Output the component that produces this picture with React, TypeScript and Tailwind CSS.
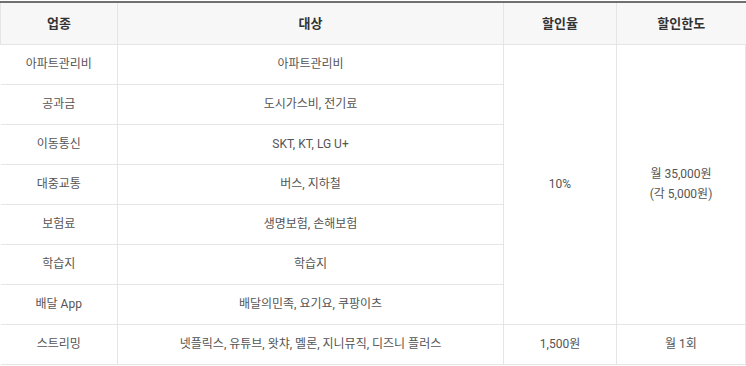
const rows = [
  { type: '아파트관리비', target: '아파트관리비' },
  { type: '공과금', target: '도시가스비, 전기료' },
  { type: '이동통신', target: 'SKT, KT, LG U+' },
  { type: '대중교통', target: '버스, 지하철' },
  { type: '보험료', target: '생명보험, 손해보험' },
  { type: '학습지', target: '학습지' },
  { type: '배달 App', target: '배달의민족, 요기요, 쿠팡이츠' },
]

const cell = 'border border-[#e5e5e5] text-center align-middle'

export default function App() {
  return (
    <div className="w-[746px] h-[366px] bg-white pt-px font-['Roboto','Noto_Sans_CJK_KR',sans-serif]">
      <table className="w-[746px] border-collapse table-fixed border-t-2 border-t-[#707070] text-[12px] text-[#555]">
        <colgroup>
          <col className="w-[117px]" />
          <col className="w-[386px]" />
          <col className="w-[113px]" />
          <col />
        </colgroup>
        <thead>
          <tr className="h-[42px] bg-[#f7f7f7] text-[#333] text-[13px] font-bold">
            <th className={`${cell} border-t-[#707070] border-t-2`}>업종</th>
            <th className={`${cell} border-t-[#707070] border-t-2`}>대상</th>
            <th className={`${cell} border-t-[#707070] border-t-2`}>할인율</th>
            <th className={`${cell} border-t-[#707070] border-t-2 border-r-0`}>할인한도</th>
          </tr>
        </thead>
        <tbody>
          {rows.map((r, i) => (
            <tr key={r.type} className="h-[40px]">
              <td className={`${cell} border-l-0`}>{r.type}</td>
              <td className={cell}>{r.target}</td>
              {i === 0 && (
                <>
                  <td rowSpan={7} className={cell}>10%</td>
                  <td rowSpan={7} className={`${cell} leading-[20px]`}>
                    월 35,000원
                    <br />
                    (각 5,000원)
                  </td>
                </>
              )}
            </tr>
          ))}
          <tr className="h-[40px]">
            <td className={`${cell} border-l-0`}>스트리밍</td>
            <td className={cell}>넷플릭스, 유튜브, 왓챠, 멜론, 지니뮤직, 디즈니 플러스</td>
            <td className={cell}>1,500원</td>
            <td className={cell}>월 1회</td>
          </tr>
        </tbody>
      </table>
    </div>
  )
}
